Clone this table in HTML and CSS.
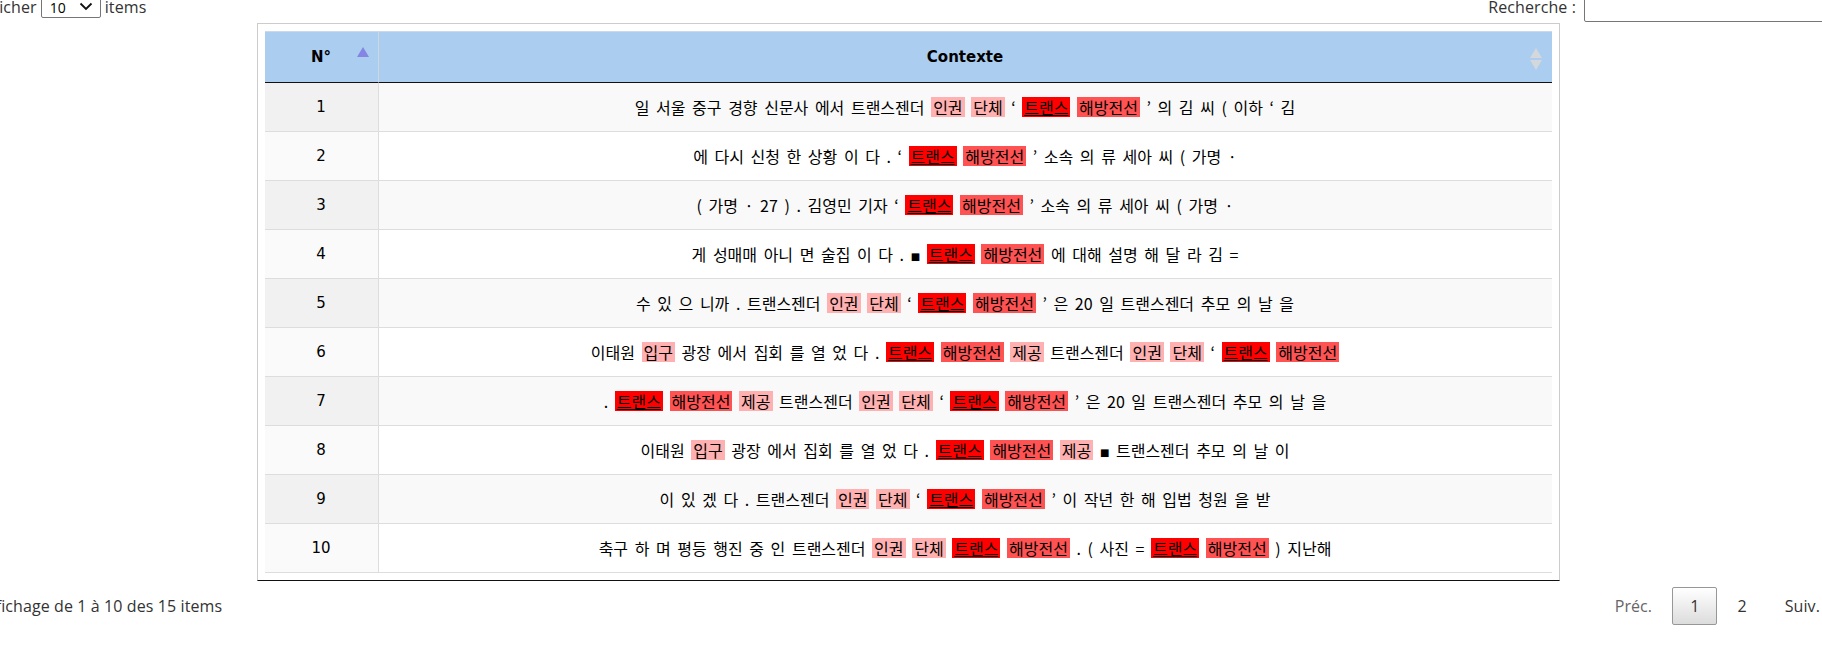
FILE: index.html
```html
<!DOCTYPE html>
<html lang="fr">
<head>
<meta charset="utf-8">
<title>Concordancier</title>
<link rel="stylesheet" href="styles.css">
</head>
<body>
<div class="page">
  <div class="top">
    <label class="length">Afficher
      <span class="select-wrap">
        <select class="select"><option>10</option><option>25</option><option>50</option></select>
        <svg class="chev" width="14" height="9" viewBox="0 0 14 9"><path d="M1.5 1.5 L7 7 L12.5 1.5" fill="none" stroke="#111" stroke-width="1.8"/></svg>
      </span>
      items</label>
    <label class="filter">Recherche : <input class="search" type="search"></label>
  </div>

  <div class="scroll">
    <table class="grid">
      <thead>
        <tr>
          <th class="c-num">N°<span class="sort-asc"></span></th>
          <th class="c-ctx">Contexte<span class="sort-both"><span class="up"></span><span class="down"></span></span></th>
        </tr>
      </thead>
      <tbody>
        <tr class="odd"><td class="num">1</td><td class="ctx">일 서울 중구 경향 신문사 에서 트랜스젠더 <span class="k a">인권</span> <span class="k a">단체</span> ‘ <span class="k b">트랜스</span> <span class="k c">해방전선</span> ’ 의 김 씨 ( 이하 ‘ 김</td></tr>
        <tr class="even"><td class="num">2</td><td class="ctx">에 다시 신청 한 상황 이 다 . ‘ <span class="k b">트랜스</span> <span class="k c">해방전선</span> ’ 소속 의 류 세아 씨 ( 가명 ·</td></tr>
        <tr class="odd"><td class="num">3</td><td class="ctx">( 가명 · 27 ) . 김영민 기자 ‘ <span class="k b">트랜스</span> <span class="k c">해방전선</span> ’ 소속 의 류 세아 씨 ( 가명 ·</td></tr>
        <tr class="even"><td class="num">4</td><td class="ctx">게 성매매 아니 면 술집 이 다 . <span class="sq">■</span> <span class="k b">트랜스</span> <span class="k c">해방전선</span> 에 대해 설명 해 달 라 김 =</td></tr>
        <tr class="odd"><td class="num">5</td><td class="ctx">수 있 으 니까 . 트랜스젠더 <span class="k a">인권</span> <span class="k a">단체</span> ‘ <span class="k b">트랜스</span> <span class="k c">해방전선</span> ’ 은 20 일 트랜스젠더 추모 의 날 을</td></tr>
        <tr class="even"><td class="num">6</td><td class="ctx">이태원 <span class="k a">입구</span> 광장 에서 집회 를 열 었 다 . <span class="k b">트랜스</span> <span class="k c">해방전선</span> <span class="k a">제공</span> 트랜스젠더 <span class="k a">인권</span> <span class="k a">단체</span> ‘ <span class="k b">트랜스</span> <span class="k c">해방전선</span></td></tr>
        <tr class="odd"><td class="num">7</td><td class="ctx">. <span class="k b">트랜스</span> <span class="k c">해방전선</span> <span class="k a">제공</span> 트랜스젠더 <span class="k a">인권</span> <span class="k a">단체</span> ‘ <span class="k b">트랜스</span> <span class="k c">해방전선</span> ’ 은 20 일 트랜스젠더 추모 의 날 을</td></tr>
        <tr class="even"><td class="num">8</td><td class="ctx">이태원 <span class="k a">입구</span> 광장 에서 집회 를 열 었 다 . <span class="k b">트랜스</span> <span class="k c">해방전선</span> <span class="k a">제공</span> <span class="sq">■</span> 트랜스젠더 추모 의 날 이</td></tr>
        <tr class="odd"><td class="num">9</td><td class="ctx">이 있 겠 다 . 트랜스젠더 <span class="k a">인권</span> <span class="k a">단체</span> ‘ <span class="k b">트랜스</span> <span class="k c">해방전선</span> ’ 이 작년 한 해 입법 청원 을 받</td></tr>
        <tr class="even"><td class="num">10</td><td class="ctx">축구 하 며 평등 행진 중 인 트랜스젠더 <span class="k a">인권</span> <span class="k a">단체</span> <span class="k b">트랜스</span> <span class="k c">해방전선</span> . ( 사진 = <span class="k b">트랜스</span> <span class="k c">해방전선</span> ) 지난해</td></tr>
      </tbody>
    </table>
  </div>

  <div class="bottom">
    <div class="info">Affichage de 1 à 10 des 15 items</div>
    <div class="paging">
      <a class="btn disabled">Préc.</a>
      <a class="btn current">1</a>
      <a class="btn">2</a>
      <a class="btn">Suiv.</a>
    </div>
  </div>
</div>
</body>
</html>
```

FILE: styles.css
```css
html, body {
  margin: 0;
  padding: 0;
  overflow: hidden;
  background: #fff;
}

.page {
  width: 1916px;
  margin: -8px 0 0 -50px;
  font-family: "Open Sans", "Noto Sans", sans-serif;
  font-size: 16px;
  letter-spacing: 0.1px;
  color: #333;
}

/* top controls */
.top {
  display: flex;
  justify-content: space-between;
  align-items: center;
  height: 30px;
}

.length {
  display: flex;
  align-items: center;
  gap: 4px;
  padding-left: 28px;
}

.select-wrap {
  position: relative;
  display: inline-block;
}

.select {
  appearance: none;
  -webkit-appearance: none;
  width: 60px;
  height: 21px;
  padding: 0 0 0 8px;
  border: 1px solid #767676;
  border-radius: 2px;
  background: #fff;
  font-family: "Open Sans", sans-serif;
  font-size: 14px;
  color: #000;
}

.chev {
  position: absolute;
  right: 8px;
  top: 6px;
  pointer-events: none;
}

.filter {
  display: flex;
  align-items: center;
  gap: 8px;
}

.search {
  width: 282px;
  height: 30px;
  box-sizing: border-box;
  border: 1px solid #767676;
  border-radius: 2px;
  margin: 0;
}

/* table box */
.scroll {
  box-sizing: border-box;
  width: 1303px;
  height: 558px;
  margin: 1px auto 0;
  padding: 7px;
  border: 1px solid #ccc;
  border-bottom-color: #111;
  overflow: hidden;
}

.grid {
  width: 100%;
  border-collapse: separate;
  border-spacing: 0;
  letter-spacing: 0;
}

.grid th {
  position: relative;
  height: 52px;
  padding: 0 18px;
  box-sizing: border-box;
  background: #abcdef;
  border-top: 1px solid #c9d9ea;
  border-bottom: 1px solid #111;
  font-family: "DejaVu Sans", Verdana, sans-serif;
  font-weight: bold;
  font-size: 15px;
  color: #000;
  text-align: center;
}

.grid th.c-num {
  width: 114px;
  border-right: 1px solid #cfd7df;
}

.sort-asc {
  position: absolute;
  right: 9px;
  top: 15px;
  width: 0;
  height: 0;
  border-left: 6px solid transparent;
  border-right: 6px solid transparent;
  border-bottom: 10px solid #8585e3;
}

.sort-both {
  position: absolute;
  right: 10px;
  top: 16px;
  display: flex;
  flex-direction: column;
  gap: 2px;
}

.sort-both .up {
  width: 0;
  height: 0;
  border-left: 6px solid transparent;
  border-right: 6px solid transparent;
  border-bottom: 10px solid #d4d8dc;
}

.sort-both .down {
  width: 0;
  height: 0;
  border-left: 6px solid transparent;
  border-right: 6px solid transparent;
  border-top: 10px solid #d4d8dc;
}

.grid td {
  height: 48px;
  padding: 0 10px;
  border-bottom: 1px solid #ddd;
  text-align: center;
  vertical-align: middle;
  font-family: "Noto Sans CJK KR", "Noto Sans", sans-serif;
  font-size: 16px;
  word-spacing: 3px;
  color: #000;
}

.grid td.num {
  border-right: 1px solid #ddd;
  font-family: "DejaVu Sans", Verdana, sans-serif;
  font-size: 15px;
  word-spacing: 0;
}

.grid tr.odd td { background: #f9f9f9; }
.grid tr.odd td.num { background: #f1f1f1; }
.grid tr.even td { background: #fff; }
.grid tr.even td.num { background: #fafafa; }

.k {
  display: inline-block;
  line-height: 20px;
  padding: 0 2px;
}
.k.a { background: #ffb0b0; }
.k.b { background: #ff0000; text-decoration: underline; }
.k.c { background: #ff5252; }

.sq {
  font-family: "DejaVu Sans", sans-serif;
  font-size: 10px;
  vertical-align: 1px;
}

/* bottom bar */
.bottom {
  display: flex;
  justify-content: space-between;
  align-items: center;
  margin-top: 6px;
  padding: 0 28px 0 30px;
}

.paging {
  display: flex;
  align-items: center;
}

.btn {
  display: inline-block;
  box-sizing: border-box;
  min-width: 1.5em;
  padding: 7px 17px;
  line-height: 22px;
  margin-left: 2px;
  border: 1px solid transparent;
  border-radius: 2px;
  color: #333;
  text-align: center;
  cursor: pointer;
}

.btn.disabled {
  color: #666;
  cursor: default;
}

.btn.current {
  border-color: #979797;
  background: linear-gradient(to bottom, #fff 0%, #dcdcdc 100%);
}
```
